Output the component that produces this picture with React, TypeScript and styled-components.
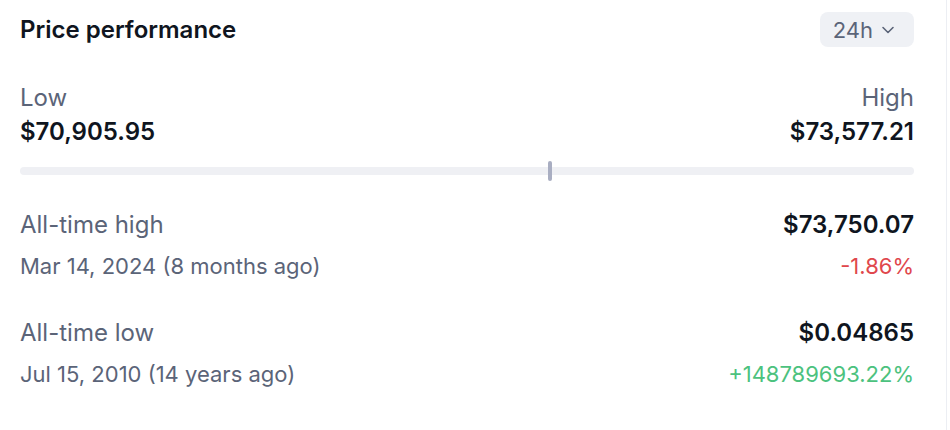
import React from "react";
import styled, { createGlobalStyle } from "styled-components";

const GlobalStyle = createGlobalStyle`
  body {
    margin: 0;
    background: #ffffff;
    font-family: Inter, "Noto Sans", sans-serif;
  }
`;

interface StatProps {
  label: string;
  date: string;
  value: string;
  change: string;
  positive: boolean;
}

const StatBlock: React.FC<StatProps> = ({ label, date, value, change, positive }) => (
  <StatRow>
    <StatSide>
      <Label>{label}</Label>
      <DateText>{date}</DateText>
    </StatSide>
    <StatSide $right>
      <Value>{value}</Value>
      <Change $positive={positive}>{change}</Change>
    </StatSide>
  </StatRow>
);

// position of current price within the 24h low/high range
const low = 70905.95;
const high = 73577.21;
const current = 72490;

const App: React.FC = () => {
  const pct = ((current - low) / (high - low)) * 100;

  return (
    <>
      <GlobalStyle />
      <Panel>
        <Header>
          <Title>Price performance</Title>
          <RangeButton>
            24h
            <svg width="14" height="8" viewBox="0 0 14 8" fill="none">
              <path d="M2 1.5l5 5 5-5" stroke="currentColor" strokeWidth="1.6" strokeLinecap="round" strokeLinejoin="round" />
            </svg>
          </RangeButton>
        </Header>

        <RangeRow>
          <StatSide>
            <Label>Low</Label>
            <Value>$70,905.95</Value>
          </StatSide>
          <StatSide $right>
            <Label>High</Label>
            <Value>$73,577.21</Value>
          </StatSide>
        </RangeRow>

        <Track>
          <Marker style={{ left: `${pct}%` }} />
        </Track>

        <StatBlock
          label="All-time high"
          date="Mar 14, 2024 (8 months ago)"
          value="$73,750.07"
          change="-1.86%"
          positive={false}
        />
        <StatBlock
          label="All-time low"
          date="Jul 15, 2010 (14 years ago)"
          value="$0.04865"
          change="+148789693.22%"
          positive
        />
      </Panel>
    </>
  );
};

const Panel = styled.div`
  width: 894px;
  height: 430px;
  padding: 12px 32px 0 20px;
  border-right: 1px solid #eceef3;
  display: flex;
  flex-direction: column;
`;

const Header = styled.div`
  display: flex;
  justify-content: space-between;
  align-items: center;
  height: 35px;
`;

const Title = styled.h2`
  margin: 0;
  font-size: 24px;
  line-height: 35px;
  font-weight: 600;
  color: #0f1520;
`;

const RangeButton = styled.button`
  display: flex;
  align-items: center;
  gap: 8px;
  height: 35px;
  padding: 0 19px 0 13px;
  border: none;
  border-radius: 8px;
  background: #eff1f5;
  color: #5b6478;
  font-family: inherit;
  font-size: 22px;
`;

const RangeRow = styled.div`
  display: flex;
  justify-content: space-between;
  margin-top: 34px;
`;

const StatSide = styled.div<{ $right?: boolean }>`
  display: flex;
  flex-direction: column;
  align-items: ${(p) => (p.$right ? "flex-end" : "flex-start")};
`;

const Label = styled.span`
  font-size: 24px;
  line-height: 34px;
  color: #5b6478;
`;

const Value = styled.span`
  font-size: 24px;
  line-height: 34px;
  font-weight: 600;
  color: #0f1520;
`;

const Track = styled.div`
  position: relative;
  height: 8px;
  margin-top: 18px;
  border-radius: 4px;
  background: #eff0f4;
`;

const Marker = styled.div`
  position: absolute;
  top: -6px;
  width: 4px;
  height: 20px;
  border-radius: 2px;
  background: #a9aec2;
  transform: translateX(-50%);
`;

const StatRow = styled.div`
  display: flex;
  justify-content: space-between;
  margin-top: 33px;

  & + & {
    margin-top: 35px;
  }
`;

const DateText = styled.span`
  margin-top: 9px;
  font-size: 22px;
  line-height: 30px;
  color: #5b6478;
`;

const Change = styled.span<{ $positive: boolean }>`
  margin-top: 9px;
  font-size: 22px;
  line-height: 30px;
  color: ${(p) => (p.$positive ? "#4cc27e" : "#e0474c")};
`;

export default App;
